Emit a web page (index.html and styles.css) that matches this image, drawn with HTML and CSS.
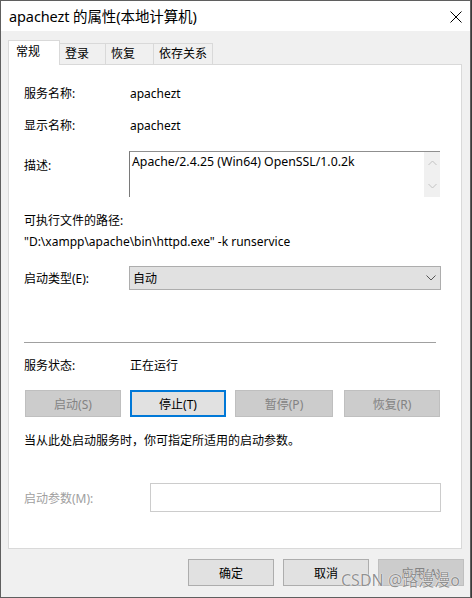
FILE: index.html
```html
<!DOCTYPE html>
<html lang="zh-CN">
<head>
<meta charset="utf-8">
<title>apachezt 的属性(本地计算机)</title>
<link rel="stylesheet" href="styles.css">
</head>
<body>
<div class="window">
  <div class="titlebar">
    <span class="title">apachezt 的属性(本地计算机)</span>
    <svg class="close" width="12" height="12" viewBox="0 0 12 12"><path d="M0.5 0.5 L11.5 11.5 M11.5 0.5 L0.5 11.5" stroke="#000" stroke-width="1" fill="none"/></svg>
  </div>
  <div class="client">
    <div class="tabs">
      <div class="tab tab-active tab-w1">常规</div>
      <div class="tab tab-w2">登录</div>
      <div class="tab tab-w3">恢复</div>
      <div class="tab tab-w4">依存关系</div>
    </div>
    <div class="panel">
      <div class="row r-name"><span class="label">服务名称:</span><span class="value">apachezt</span></div>
      <div class="row r-display"><span class="label">显示名称:</span><span class="value">apachezt</span></div>
      <div class="row-top r-desc">
        <span class="label label-desc">描述:</span>
        <div class="textbox">
          <div class="textbox-text">Apache/2.4.25 (Win64) OpenSSL/1.0.2k</div>
          <div class="scrollbar">
            <svg width="9" height="6" viewBox="0 0 9 6"><path d="M0.5 5 L4.5 1 L8.5 5" stroke="#c2c2c2" fill="none"/></svg>
            <svg width="9" height="6" viewBox="0 0 9 6"><path d="M0.5 1 L4.5 5 L8.5 1" stroke="#c2c2c2" fill="none"/></svg>
          </div>
        </div>
      </div>
      <div class="row r-exe">可执行文件的路径:</div>
      <div class="row r-path">"D:\xampp\apache\bin\httpd.exe" -k runservice</div>
      <div class="row-select r-type">
        <span class="label label-narrow">启动类型(E):</span>
        <div class="select">
          <span>自动</span>
          <svg width="10" height="6" viewBox="0 0 10 6"><path d="M0.5 0.5 L5 5 L9.5 0.5" stroke="#555" fill="none"/></svg>
        </div>
      </div>
      <div class="separator"></div>
      <div class="row r-status"><span class="label">服务状态:</span><span class="value">正在运行</span></div>
      <div class="btn-row">
        <div class="btn btn-disabled">启动(S)</div>
        <div class="btn btn-default">停止(T)</div>
        <div class="btn btn-disabled btn-wide">暂停(P)</div>
        <div class="btn btn-disabled btn-last">恢复(R)</div>
      </div>
      <div class="row r-hint">当从此处启动服务时，你可指定所适用的启动参数。</div>
      <div class="row-param r-param">
        <span class="label label-param">启动参数(M):</span>
        <div class="input"></div>
      </div>
    </div>
    <div class="footer">
      <div class="btn btn-foot">确定</div>
      <div class="btn btn-foot">取消</div>
      <div class="btn btn-foot btn-disabled">应用(A)</div>
    </div>
  </div>
  <div class="watermark">CSDN @路漫漫o</div>
</div>
</body>
</html>
```

FILE: styles.css
```css
* { box-sizing: border-box; }
html, body { margin: 0; padding: 0; }
body {
  background: #3a3a3a;
  font-family: "Noto Sans", "Noto Sans CJK SC", sans-serif;
  font-size: 12px;
  color: #000;
  width: 472px;
  height: 598px;
  overflow: hidden;
}
.window {
  position: relative;
  width: 471px;
  height: 598px;
  border: 1px solid #5f5f5f;
  background: #f0f0f0;
  display: flex;
  flex-direction: column;
}
.titlebar {
  height: 30px;
  background: #fff;
  display: flex;
  align-items: center;
  justify-content: space-between;
  padding: 0 8px 0 8px;
  flex: none;
}
.title {
  font-size: 14.5px;
  line-height: 20px;
  letter-spacing: -0.1px;
}
.close { display: block; margin-top: 1px; }
.client {
  flex: 1;
  background: #f0f0f0;
  padding: 9px 6px 0 7px;
  display: flex;
  flex-direction: column;
}
.tabs {
  display: flex;
  align-items: flex-end;
  height: 25px;
}
.tab {
  height: 22px;
  border-top: 1px solid #d9d9d9;
  border-right: 1px solid #d9d9d9;
  background: #f0f0f0;
  line-height: 20px;
  padding-left: 5px;
  white-space: nowrap;
}
.tab-active {
  position: relative;
  z-index: 1;
  height: 25px;
  background: #fff;
  border-left: 1px solid #d9d9d9;
  padding-left: 7px;
  padding-top: 1px;
}
.tab-w1 { width: 52px; }
.tab-w2 { width: 46px; }
.tab-w3 { width: 48px; }
.tab-w4 { width: 59px; }
.panel {
  margin-top: -1px;
  width: 454px;
  height: 485px;
  background: #fff;
  border: 1px solid #d9d9d9;
  padding-left: 15px;
  display: flex;
  flex-direction: column;
}
.row {
  display: flex;
  align-items: center;
  height: 20px;
  line-height: 20px;
  white-space: nowrap;
}
.label { width: 106px; flex: none; }
.label-desc { width: 105px; padding-top: 5px; line-height: 20px; }
.label-narrow { width: 105px; }
.label-param { width: 126px; color: #a0a0a0; }
.r-name { margin-top: 19px; }
.r-display { margin-top: 12px; }
.row-top {
  display: flex;
  align-items: flex-start;
}
.r-desc { margin-top: 15px; }
.textbox {
  width: 311px;
  height: 46px;
  border-top: 1px solid #8f8f8f;
  border-left: 1px solid #7a7a7a;
  display: flex;
}
.textbox-text {
  flex: 1;
  padding: 2px 0 0 2px;
  line-height: 16px;
  font-size: 12.3px;
}
.scrollbar {
  width: 16px;
  background: #f0f0f0;
  display: flex;
  flex-direction: column;
  align-items: center;
  justify-content: space-between;
  padding: 8px 0 8px;
}
.scrollbar svg { display: block; }
.r-exe { margin-top: 14px; }
.r-path { margin-top: 1px; }
.row-select {
  display: flex;
  align-items: center;
  height: 24px;
}
.r-type { margin-top: 14px; }
.select {
  width: 312px;
  height: 24px;
  background: #e1e1e1;
  border: 1px solid #adadad;
  display: flex;
  align-items: center;
  justify-content: space-between;
  padding: 0 3px 0 3px;
}
.select svg { display: block; margin-right: 1px; }
.separator {
  margin-top: 52px;
  width: 412px;
  height: 1px;
  background: #a0a0a0;
}
.r-status { margin-top: 13px; }
.btn-row {
  margin-top: 14px;
  display: flex;
  gap: 9px;
  padding-left: 1px;
}
.btn {
  width: 96px;
  height: 27px;
  background: #e1e1e1;
  border: 1px solid #adadad;
  display: flex;
  align-items: center;
  justify-content: center;
  white-space: nowrap;
}
.btn-disabled {
  background: #cccccc;
  border-color: #bfbfbf;
  color: #838383;
}
.btn-default { border: 2px solid #0078d7; }
.btn-wide { width: 98px; }
.btn-last { margin-left: 2px; }
.r-hint { margin-top: 14px; }
.row-param {
  display: flex;
  align-items: center;
  height: 29px;
}
.r-param { margin-top: 32px; }
.input {
  width: 291px;
  height: 29px;
  border: 1px solid #cccccc;
  background: #fff;
}
.footer {
  margin-top: 10px;
  display: flex;
  justify-content: flex-end;
  gap: 9px;
}
.btn-foot { width: 86px; }
.watermark {
  position: absolute;
  left: 340px;
  top: 567px;
  font-size: 16px;
  line-height: 24px;
  color: rgba(125, 125, 125, 0.85);
  text-shadow: 0 0 1px #fff, 0 0 1px #fff;
  white-space: nowrap;
}
```
